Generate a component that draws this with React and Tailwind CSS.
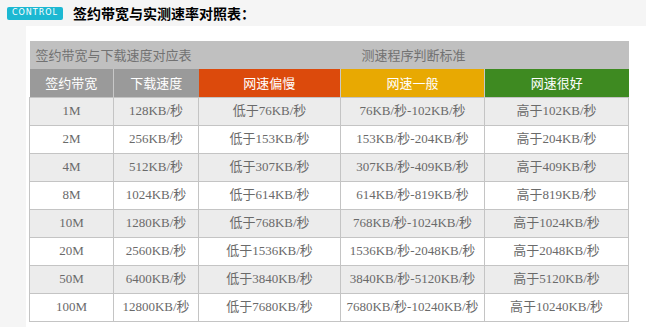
import React from "react";

const rows = [
  ["1M", "128KB/秒", "低于76KB/秒", "76KB/秒-102KB/秒", "高于102KB/秒"],
  ["2M", "256KB/秒", "低于153KB/秒", "153KB/秒-204KB/秒", "高于204KB/秒"],
  ["4M", "512KB/秒", "低于307KB/秒", "307KB/秒-409KB/秒", "高于409KB/秒"],
  ["8M", "1024KB/秒", "低于614KB/秒", "614KB/秒-819KB/秒", "高于819KB/秒"],
  ["10M", "1280KB/秒", "低于768KB/秒", "768KB/秒-1024KB/秒", "高于1024KB/秒"],
  ["20M", "2560KB/秒", "低于1536KB/秒", "1536KB/秒-2048KB/秒", "高于2048KB/秒"],
  ["50M", "6400KB/秒", "低于3840KB/秒", "3840KB/秒-5120KB/秒", "高于5120KB/秒"],
  ["100M", "12800KB/秒", "低于7680KB/秒", "7680KB/秒-10240KB/秒", "高于10240KB/秒"],
];

const cjk = { fontFamily: '"Noto Sans CJK SC", sans-serif' };

function App() {
  return (
    <div className="w-[646px] h-[327px] bg-[#f5f5f5] flex flex-col overflow-hidden">
      {/* 标题栏 */}
      <div className="h-[26px] flex items-center shrink-0">
        <span
          className="ml-[7px] w-[56px] h-[13px] rounded-[2px] bg-[#1cb8d2] text-white text-[8px] tracking-[1px] flex items-center justify-center leading-none"
          style={{ fontFamily: '"DejaVu Sans", sans-serif' }}
        >
          CONTROL
        </span>
        <span className="ml-[10px] text-[14px] font-bold text-black leading-none" style={cjk}>
          签约带宽与实测速率对照表：
        </span>
      </div>

      <div className="ml-[26px] flex-1 bg-white pt-[15px] pl-[3px]">
        <table
          className="table-fixed border-collapse w-[599px] text-[13px]"
          style={{ fontFamily: '"Liberation Serif", "Noto Sans CJK SC", serif' }}
        >
          <colgroup>
            <col className="w-[84px]" />
            <col className="w-[85px]" />
            <col className="w-[142px]" />
            <col className="w-[144px]" />
            <col className="w-[144px]" />
          </colgroup>
          <thead style={cjk}>
            <tr className="h-[28px] bg-[#c0c0c0] text-[#727272]">
              <th colSpan={2} className="font-normal text-left pl-[6px] whitespace-nowrap">
                签约带宽与下载速度对应表
              </th>
              <th colSpan={3} className="font-normal text-center">
                测速程序判断标准
              </th>
            </tr>
            <tr className="h-[28px] text-white">
              <th className="font-normal bg-[#9a9a9a] border-r border-[#c8c8c8]">签约带宽</th>
              <th className="font-normal bg-[#9a9a9a]">下载速度</th>
              <th className="font-normal bg-[#dc4a0c] border-r border-[#c8c8c8]">网速偏慢</th>
              <th className="font-normal bg-[#e8a902] border-r border-[#c8c8c8]">网速一般</th>
              <th className="font-normal bg-[#3e8a21]">网速很好</th>
            </tr>
          </thead>
          <tbody className="text-[#6a6a6a]">
            {rows.map((r, i) => (
              <tr key={r[0]} className={i % 2 === 0 ? "h-[28px] bg-[#ececec]" : "h-[28px] bg-white"}>
                {r.map((c, j) => (
                  <td
                    key={j}
                    className="border border-[#c4c4c4] text-center whitespace-nowrap p-0"
                  >
                    {c}
                  </td>
                ))}
              </tr>
            ))}
          </tbody>
        </table>
      </div>
    </div>
  );
}

export default App;
